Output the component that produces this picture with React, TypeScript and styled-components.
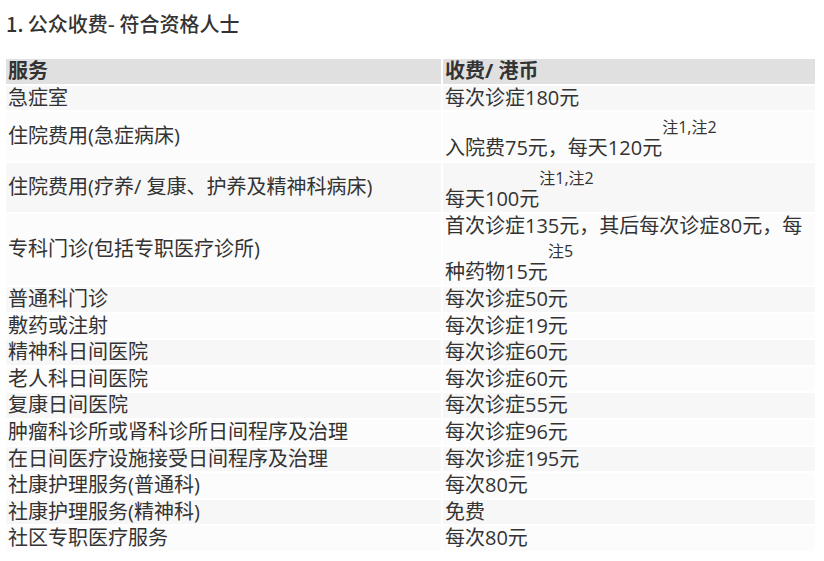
import React from "react";
import styled, { createGlobalStyle } from "styled-components";

const GlobalStyle = createGlobalStyle`
  html, body {
    margin: 0;
    padding: 0;
    background: #ffffff;
  }
  body {
    font-family: "Open Sans", "Noto Sans CJK SC", sans-serif;
    color: #333333;
  }
`;

const Page = styled.div`
  padding: 12px 4px 0 4px;
`;

const Title = styled.h3`
  margin: 0 0 22px 2px;
  font-family: "Noto Sans CJK SC", "Open Sans", sans-serif;
  font-size: 20px;
  line-height: 23px;
  font-weight: 500;
  color: #333333;
`;

const Table = styled.table`
  width: 813px;
  table-layout: fixed;
  border-collapse: separate;
  border-spacing: 2px;
  font-size: 20px;
  line-height: 22.8px;
`;

const HeadCell = styled.th`
  background: #e0e0e0;
  text-align: left;
  font-weight: 700;
  padding: 1px 2px;
  vertical-align: middle;
`;

const Row = styled.tr<{ $shade: boolean }>`
  background: ${(p) => (p.$shade ? "#f7f7f7" : "#fcfcfc")};
`;

const Cell = styled.td`
  padding: 1px 2px 0.8px 2px;
  vertical-align: middle;
  font-weight: 400;
`;

const Note = styled.sup`
  font-size: 16px;
  line-height: 28px;
  vertical-align: 22px;
`;

type Item = { service: string; fee: string; note?: string };

const items: Item[] = [
  { service: "急症室", fee: "每次诊症180元" },
  { service: "住院费用(急症病床)", fee: "入院费75元，每天120元", note: "注1,注2" },
  { service: "住院费用(疗养/ 复康、护养及精神科病床)", fee: "每天100元", note: "注1,注2" },
  {
    service: "专科门诊(包括专职医疗诊所)",
    fee: "首次诊症135元，其后每次诊症80元，每种药物15元",
    note: "注5",
  },
  { service: "普通科门诊", fee: "每次诊症50元" },
  { service: "敷药或注射", fee: "每次诊症19元" },
  { service: "精神科日间医院", fee: "每次诊症60元" },
  { service: "老人科日间医院", fee: "每次诊症60元" },
  { service: "复康日间医院", fee: "每次诊症55元" },
  { service: "肿瘤科诊所或肾科诊所日间程序及治理", fee: "每次诊症96元" },
  { service: "在日间医疗设施接受日间程序及治理", fee: "每次诊症195元" },
  { service: "社康护理服务(普通科)", fee: "每次80元" },
  { service: "社康护理服务(精神科)", fee: "免费" },
  { service: "社区专职医疗服务", fee: "每次80元" },
];

export default function App() {
  return (
    <>
      <GlobalStyle />
      <Page>
        <Title>1. 公众收费- 符合资格人士</Title>
        <Table>
          <colgroup>
            <col style={{ width: 435 }} />
            <col style={{ width: 372 }} />
          </colgroup>
          <thead>
            <tr>
              <HeadCell>服务</HeadCell>
              <HeadCell>收费/ 港币</HeadCell>
            </tr>
          </thead>
          <tbody>
            {items.map((it, i) => (
              <Row key={it.service} $shade={i % 2 === 0}>
                <Cell>{it.service}</Cell>
                <Cell>
                  {it.fee}
                  {it.note && <Note>{it.note}</Note>}
                </Cell>
              </Row>
            ))}
          </tbody>
        </Table>
      </Page>
    </>
  );
}
